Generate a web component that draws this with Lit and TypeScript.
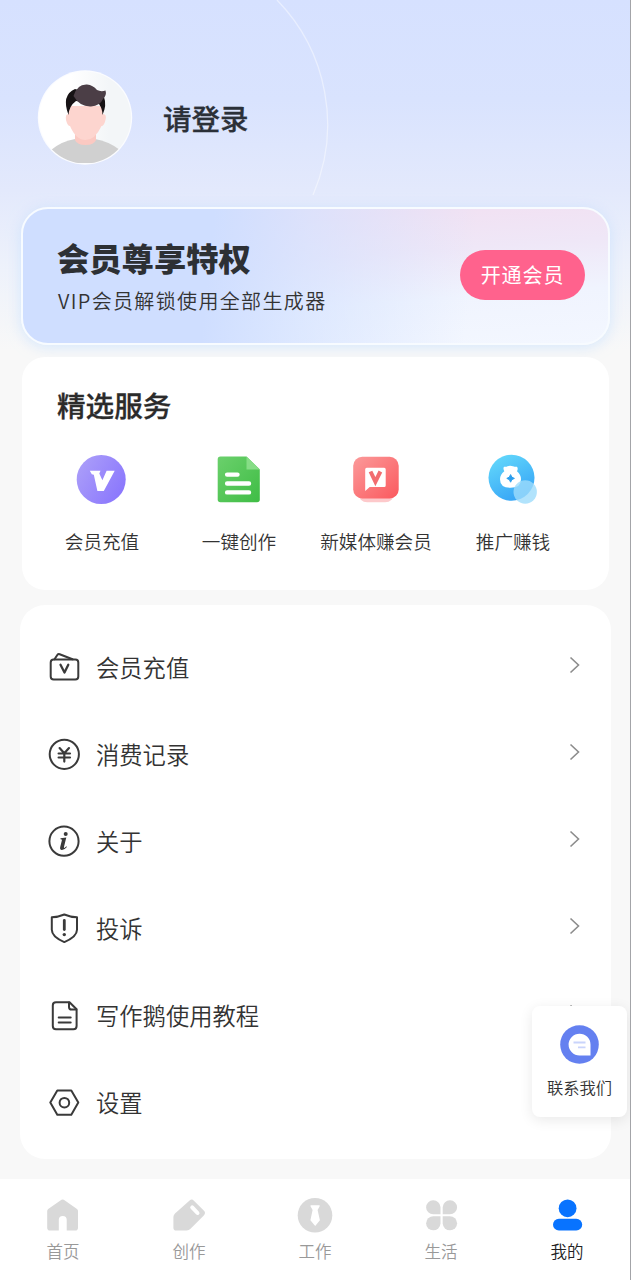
import { LitElement, html, css, svg } from 'lit';
import { customElement } from 'lit/decorators.js';

const serviceIcons = {
  vip: svg`
    <defs><linearGradient id="p" x1="0" y1="0.2" x2="1" y2="0.8"><stop offset="0" stop-color="#ab9ef9"/><stop offset="1" stop-color="#8975fd"/></linearGradient></defs>
    <circle cx="26.200" cy="25.500" r="24.500" fill="url(#p)"/>
    <path d="M14.800 16.700H25.500L24.300 19.500L27.400 26.200L31.600 16.700H39.700L28.800 37H22.400L18.800 20.800L16.800 20.300Z" fill="#fff"/>`,
  doc: svg`
    <defs><linearGradient id="g" x1="0" y1="0" x2="1" y2="1"><stop offset="0" stop-color="#6bd06c"/><stop offset="1" stop-color="#3fbd45"/></linearGradient></defs>
    <path d="M8.500 2.600H34.500L47.800 15.500V45.500Q47.800 48.300 45 48.300H8.500Q5.700 48.300 5.700 45.500V5.400Q5.700 2.600 8.500 2.600Z" fill="url(#g)"/>
    <path d="M34.500 2.600L47.800 15.500H34.500Z" fill="#86dd86"/>
    <path d="M15.100 20.600H25.500M15.100 29.500H37M15.100 38.400H37" stroke="#fff" stroke-width="4.400" stroke-linecap="round"/>`,
  media: svg`
    <defs><linearGradient id="r" x1="0" y1="0" x2="1" y2="1"><stop offset="0" stop-color="#fb9a9a"/><stop offset="1" stop-color="#fb595e"/></linearGradient></defs>
    <g transform="translate(.7 0)">
      <rect x="8.500" y="30" width="36" height="18.300" rx="9" fill="#fdc9cb"/>
      <rect x="3.500" y="2.800" width="45.500" height="41.600" rx="9" fill="url(#r)"/>
      <path d="M17 13.700H34.500Q36 13.700 36 15.200V31.500Q36 33 34.500 33H20L15.500 37V15.200Q15.500 13.700 17 13.700Z" fill="#fff"/>
      <path d="M20.800 17.500L25.700 27.600L30.700 17.500" fill="none" stroke="#f26d70" stroke-width="4"/>
    </g>`,
  money: svg`
    <defs><linearGradient id="b" x1="0.200" y1="0" x2="0.700" y2="1"><stop offset="0" stop-color="#63d8fb"/><stop offset="1" stop-color="#35a3f6"/></linearGradient></defs>
    <circle cx="25.500" cy="23.700" r="23" fill="url(#b)"/>
    <path d="M18 12.800Q20.500 13 21.500 12.300Q24.300 11 27 12.300Q29 13 31 12.800Q32.400 14.500 31 17.200Q35 20.500 35 25.200Q35 33.800 24.500 33.800Q14 33.800 14 25.200Q14 20.500 18.300 17.200Q16.800 14.500 18 12.800Z" fill="#fff"/>
    <path d="M24.600 20.600Q25.200 23.800 28.400 24.400Q25.200 25 24.600 28.200Q24 25 20.800 24.400Q24 23.800 24.600 20.600Z" fill="#2b9eed" stroke="#2b9eed"/>
    <circle cx="39.200" cy="38" r="11.700" fill="#9edcfb" fill-opacity="0.800"/>`,
};

const menuIcons = {
  wallet: svg`<rect x="2.700" y="8.600" width="27.600" height="20" rx="3"/><path d="M6.500 8.300L9.300 4Q10.200 2.700 11.700 3.200L24.500 8.300"/><path d="M12.500 13.800L16.500 21.600L20.300 13.800" stroke-width="2.300"/>`,
  yen: svg`<circle cx="16.300" cy="16.300" r="14.600"/><path d="M11.600 10.100L16.300 15.300L21 10.100M10.600 15.500H22M10.600 19.500H22M16.300 15.300V23.600" stroke-width="2.200"/>`,
  info: svg`<circle cx="16" cy="16.200" r="14.600"/><circle cx="17.700" cy="9" r="2" fill="#3a3a3a" stroke="none"/><path d="M12.500 13.300L18.300 12.500L16 21.700Q15.700 23.400 16.700 22.800L18.500 21.300L18.900 21.900Q15.900 25.300 13.700 25Q11.600 24.600 12.200 22L13.900 15.300Q14.200 14.100 12.500 14.200Z" fill="#3a3a3a" stroke="none"/>`,
  shield: svg`<path d="M3.800 5.300Q10 5.100 16.300 2.500Q22.600 5.100 29 5.300V17.800Q29 24.800 16.300 30.100Q3.800 24.800 3.800 17.800Z"/><path d="M16.300 8.500V17.600" stroke-width="2.800"/><circle cx="16.300" cy="22.600" r="1.700" fill="#3a3a3a" stroke="none"/>`,
  page: svg`<path d="M8 3.200H21.500L28.600 10.300V27Q28.600 30.200 25.400 30.200H8Q4.800 30.200 4.800 27V6.400Q4.800 3.200 8 3.200Z"/><path d="M21 3.400V7.900Q21 10.600 23.700 10.600H28.300M10.700 18.600H22.700M10.700 23.600H22.700"/>`,
  gear: svg`<path d="M9.300 4.500H23.300L30.300 16.600L23.300 28.800H9.300L2.300 16.600Z"/><circle cx="16.400" cy="16.700" r="4.800"/>`,
};

const tabIcons = {
  home: svg`<path d="M16.500 1.800Q17.600 1 18.800 1.800L32 11Q33 11.800 33 13V29.800Q33 32.600 30.200 32.600H21.700V21.800Q21.700 17.900 17.700 17.900Q13.800 17.900 13.800 21.800V32.600H5Q2.200 32.600 2.200 29.800V13Q2.200 11.800 3.200 11Z"/>`,
  pen: svg`<path d="M18.600 2.600Q20.800 .6 22.900 2.700L33 12.800Q35 15 33 17.200L19.500 30.800Q18 32.600 15.500 32.600H5.200Q2.400 32.600 2.400 29.800V19Q2.400 17 4 15.500Z"/><path d="M21.200 9.400L26.500 15" stroke="#fff" stroke-width="4" stroke-linecap="round"/>`,
  work: svg`<circle cx="18" cy="17.300" r="17.300"/><path d="M14 7.300H22.200Q23 7.300 22.700 8.200L20.600 12L22.900 22.200L18.200 28L13.400 22.200L15.600 12L13.500 8.200Q13.200 7.300 14 7.300Z" fill="#fff"/>`,
  life: svg`<path d="M17.500 16.300H10.300A7.200 7 0 1 1 17.500 9Z"/><path d="M19.700 16.300H26.900A7.200 7 0 1 0 19.700 9Z"/><path d="M17.500 18.300H10.300A7.200 7 0 1 0 17.500 25.600Z"/><path d="M19.700 18.300H26.900A7.200 7 0 1 1 19.700 25.600Z"/>`,
  me: svg`<circle cx="18.600" cy="10.300" r="8.900"/><rect x="4" y="20.800" width="29.200" height="11.800" rx="5.900"/>`,
};

const services = [
  { label: '会员充值', icon: serviceIcons.vip },
  { label: '一键创作', icon: serviceIcons.doc },
  { label: '新媒体赚会员', icon: serviceIcons.media },
  { label: '推广赚钱', icon: serviceIcons.money },
];

const menu = [
  { label: '会员充值', icon: menuIcons.wallet },
  { label: '消费记录', icon: menuIcons.yen },
  { label: '关于', icon: menuIcons.info },
  { label: '投诉', icon: menuIcons.shield },
  { label: '写作鹅使用教程', icon: menuIcons.page },
  { label: '设置', icon: menuIcons.gear },
];

const tabs = [
  { label: '首页', icon: tabIcons.home },
  { label: '创作', icon: tabIcons.pen },
  { label: '工作', icon: tabIcons.work },
  { label: '生活', icon: tabIcons.life },
  { label: '我的', icon: tabIcons.me, active: true },
];

@customElement('app-root')
export class AppRoot extends LitElement {
  static styles = css`
    :host {
      display: block;
      font-family: 'Noto Sans CJK SC', sans-serif;
      font-weight: 350;
      color: #333;
    }
    * { box-sizing: border-box; }
    svg { display: block; flex: none; }
    .page {
      position: relative;
      display: flex;
      flex-direction: column;
      height: 1280px;
      overflow: hidden;
      border-right: 1px solid #a3a4a8;
      background: linear-gradient(#d6e1ff 0, #d9e3fe 100px, #e3e9fc 190px, #eef2fb 270px, #f8f8f8 350px);
    }
    .ring { position: absolute; left: 0; top: 0; }
    .profile {
      display: flex;
      align-items: flex-start;
      gap: 30px;
      height: 207px;
      padding: 70px 38px 0 37px;
    }
    .name {
      padding-top: 28px;
      font-size: 28.500px;
      line-height: 40px;
      font-weight: 500;
      color: #2b3038;
      -webkit-text-stroke: .3px #2b3038;
    }
    .banner {
      display: flex;
      align-items: center;
      justify-content: space-between;
      height: 138px;
      margin: 0 20px 12px 21px;
      padding: 0 23px 3px 34px;
      border: 2px solid #f7fbff;
      border-radius: 27px;
      background:
        linear-gradient(96deg, #cfdeff 32%, rgba(212, 226, 255, .7) 48%, rgba(230, 240, 255, 0) 76%),
        linear-gradient(176deg, #f2dff1 8%, #efe7f7 40%, #f0f4fe 68%, #f3f7ff 100%);
      box-shadow: 0 2px 14px rgba(190, 220, 255, .6);
    }
    .pitch { display: flex; flex-direction: column; padding-top: 3px; }
    .headline { font-size: 32.300px; line-height: 40px; font-weight: 900; color: #2d3034; }
    .sub { font-size: 20px; line-height: 28px; letter-spacing: 1.350px; margin-top: 10px; padding-left: 1px; }
    .open {
      display: flex;
      align-items: center;
      justify-content: center;
      width: 125px;
      height: 50px;
      border-radius: 25px;
      background: #ff628d;
      color: #fff;
      font-size: 20px;
      font-weight: 400;
      letter-spacing: .9px;
    }
    .services {
      height: 233px;
      margin: 0 21px 15px 22px;
      padding: 27px 15px 0 11px;
      border-radius: 23px;
      background: #fff;
    }
    .title {
      padding-left: 24px;
      font-size: 28.600px;
      line-height: 42px;
      font-weight: 500;
      color: #2b2b2b;
      -webkit-text-stroke: .3px #2b2b2b;
    }
    .grid { display: grid; grid-template-columns: repeat(4, 137px); margin-top: 28px; }
    .service { display: flex; flex-direction: column; align-items: center; gap: 20px; font-size: 18.600px; line-height: 28px; white-space: nowrap; }
    .service span { padding-left: 1px; }
    .menu {
      height: 554px;
      margin: 0 19px 20px 20px;
      padding: 18px 30px 0 28px;
      border-radius: 25px;
      background: #fff;
    }
    .row { display: flex; align-items: center; height: 87px; }
    .label { flex: 1; padding: 0 0 0 16px; font-size: 23.300px; line-height: 34px; }
    .line { fill: none; stroke: #3a3a3a; stroke-width: 2; stroke-linejoin: round; stroke-linecap: round; }
    .chevron { margin-bottom: 4px; fill: none; stroke: #8c8c8c; stroke-width: 1.600; }
    .tabs { display: grid; grid-template-columns: repeat(5, 1fr); flex: 1; padding-top: 19px; background: #fff; }
    .tab { display: flex; flex-direction: column; align-items: center; font-size: 16.500px; line-height: 24px; color: #999; gap: 6px; }
    .tab svg { fill: #d9d9d9; }
    .active { color: #222; }
    .active svg { fill: #0873ff; }
    .contact {
      position: absolute;
      left: 532px;
      top: 1006px;
      width: 95px;
      height: 111px;
      display: flex;
      flex-direction: column;
      align-items: center;
      padding-top: 19px;
      gap: 11px;
      border-radius: 8px;
      background: #fff;
      box-shadow: 0 3px 14px rgba(0, 0, 0, .09);
      font-size: 16.300px;
      line-height: 24px;
    }
  `;

  render() {
    return html`
      <div class="page">
        <svg class="ring" width="360" height="207" viewBox="0 0 360 207">
          <path d="M277 0A178 178 0 0 1 313 195" fill="none" stroke="#fff" stroke-opacity=".45" stroke-width="1.300"/>
        </svg>
        <header class="profile">
          <svg width="96" height="96" viewBox="0 0 96 96">
            <defs>
              <clipPath id="face"><circle cx="48" cy="47.500" r="46"/></clipPath>
              <linearGradient id="bg" x1="0" x2="1"><stop offset=".35" stop-color="#fff"/><stop offset=".75" stop-color="#f3f6f8"/></linearGradient>
            </defs>
            <circle cx="48" cy="47.500" r="47.200" fill="#fbfcff"/>
            <g clip-path="url(#face)">
              <rect width="96" height="96" fill="url(#bg)"/>
              <path d="M14 80Q25 71 38 69H58Q71 71 83 80V93H14Z" fill="#d0d0d0"/>
              <path d="M38 58H59V70Q57 75 48.500 75Q40 75 38 70Z" fill="#fbc9c2"/>
              <path d="M31.500 36H66V44Q70 44 68.500 50Q67 56 64.500 56Q58 70 48.500 70Q39 70 33 56Q30.500 56 29 50Q28 44 31.500 44Z" fill="#fdd5cf"/>
              <path d="M31.500 45Q24 25 38 19L67 27Q70 35 65.500 45Q65.500 39 62 34L39 31Q32 36 31.500 45Z" fill="#171315"/>
              <path d="M36.500 26Q40 14 50 14.500Q56 15 60 20Q64 22 68.500 20.500Q70 25 66 29Q63 36 54 36.500Q43 37 36.500 26Z" fill="#4b3e46"/>
            </g>
          </svg>
          <span class="name">请登录</span>
        </header>

        <section class="banner">
          <div class="pitch">
            <span class="headline">会员尊享特权</span>
            <span class="sub">VIP会员解锁使用全部生成器</span>
          </div>
          <span class="open">开通会员</span>
        </section>

        <section class="services">
          <div class="title">精选服务</div>
          <div class="grid">
            ${services.map((s) => html`
              <div class="service">
                <svg width="53" height="53" viewBox="0 0 53 53">${s.icon}</svg>
                <span>${s.label}</span>
              </div>`)}
          </div>
        </section>

        <section class="menu">
          ${menu.map((m) => html`
            <div class="row">
              <svg class="line" width="32" height="32" viewBox="0 0 32 32" overflow="visible">${m.icon}</svg>
              <span class="label">${m.label}</span>
              <svg class="chevron" width="12" height="18" viewBox="0 0 12 18"><path d="M1.500 1.500L9.500 9L1.500 16.500"/></svg>
            </div>`)}
        </section>

        <nav class="tabs">
          ${tabs.map((t) => html`
            <div class="tab ${t.active ? 'active' : ''}">
              <svg width="36" height="35" viewBox="0 0 36 35">${t.icon}</svg>
              <span>${t.label}</span>
            </div>`)}
        </nav>

        <aside class="contact">
          <svg width="39" height="39" viewBox="0 0 39 39">
            <circle cx="19.500" cy="19.500" r="19.300" fill="#6480f0"/>
            <path d="M19.500 8.700A10.900 10.900 0 0 1 30.500 19.600V30.500H19.500A10.900 10.900 0 0 1 19.500 8.700Z" fill="#fff"/>
            <path d="M13.500 17.500H25.500M18 22.300H25.500" stroke="#c9d4fb" stroke-width="1.800"/>
          </svg>
          <span>联系我们</span>
        </aside>
      </div>
    `;
  }
}
